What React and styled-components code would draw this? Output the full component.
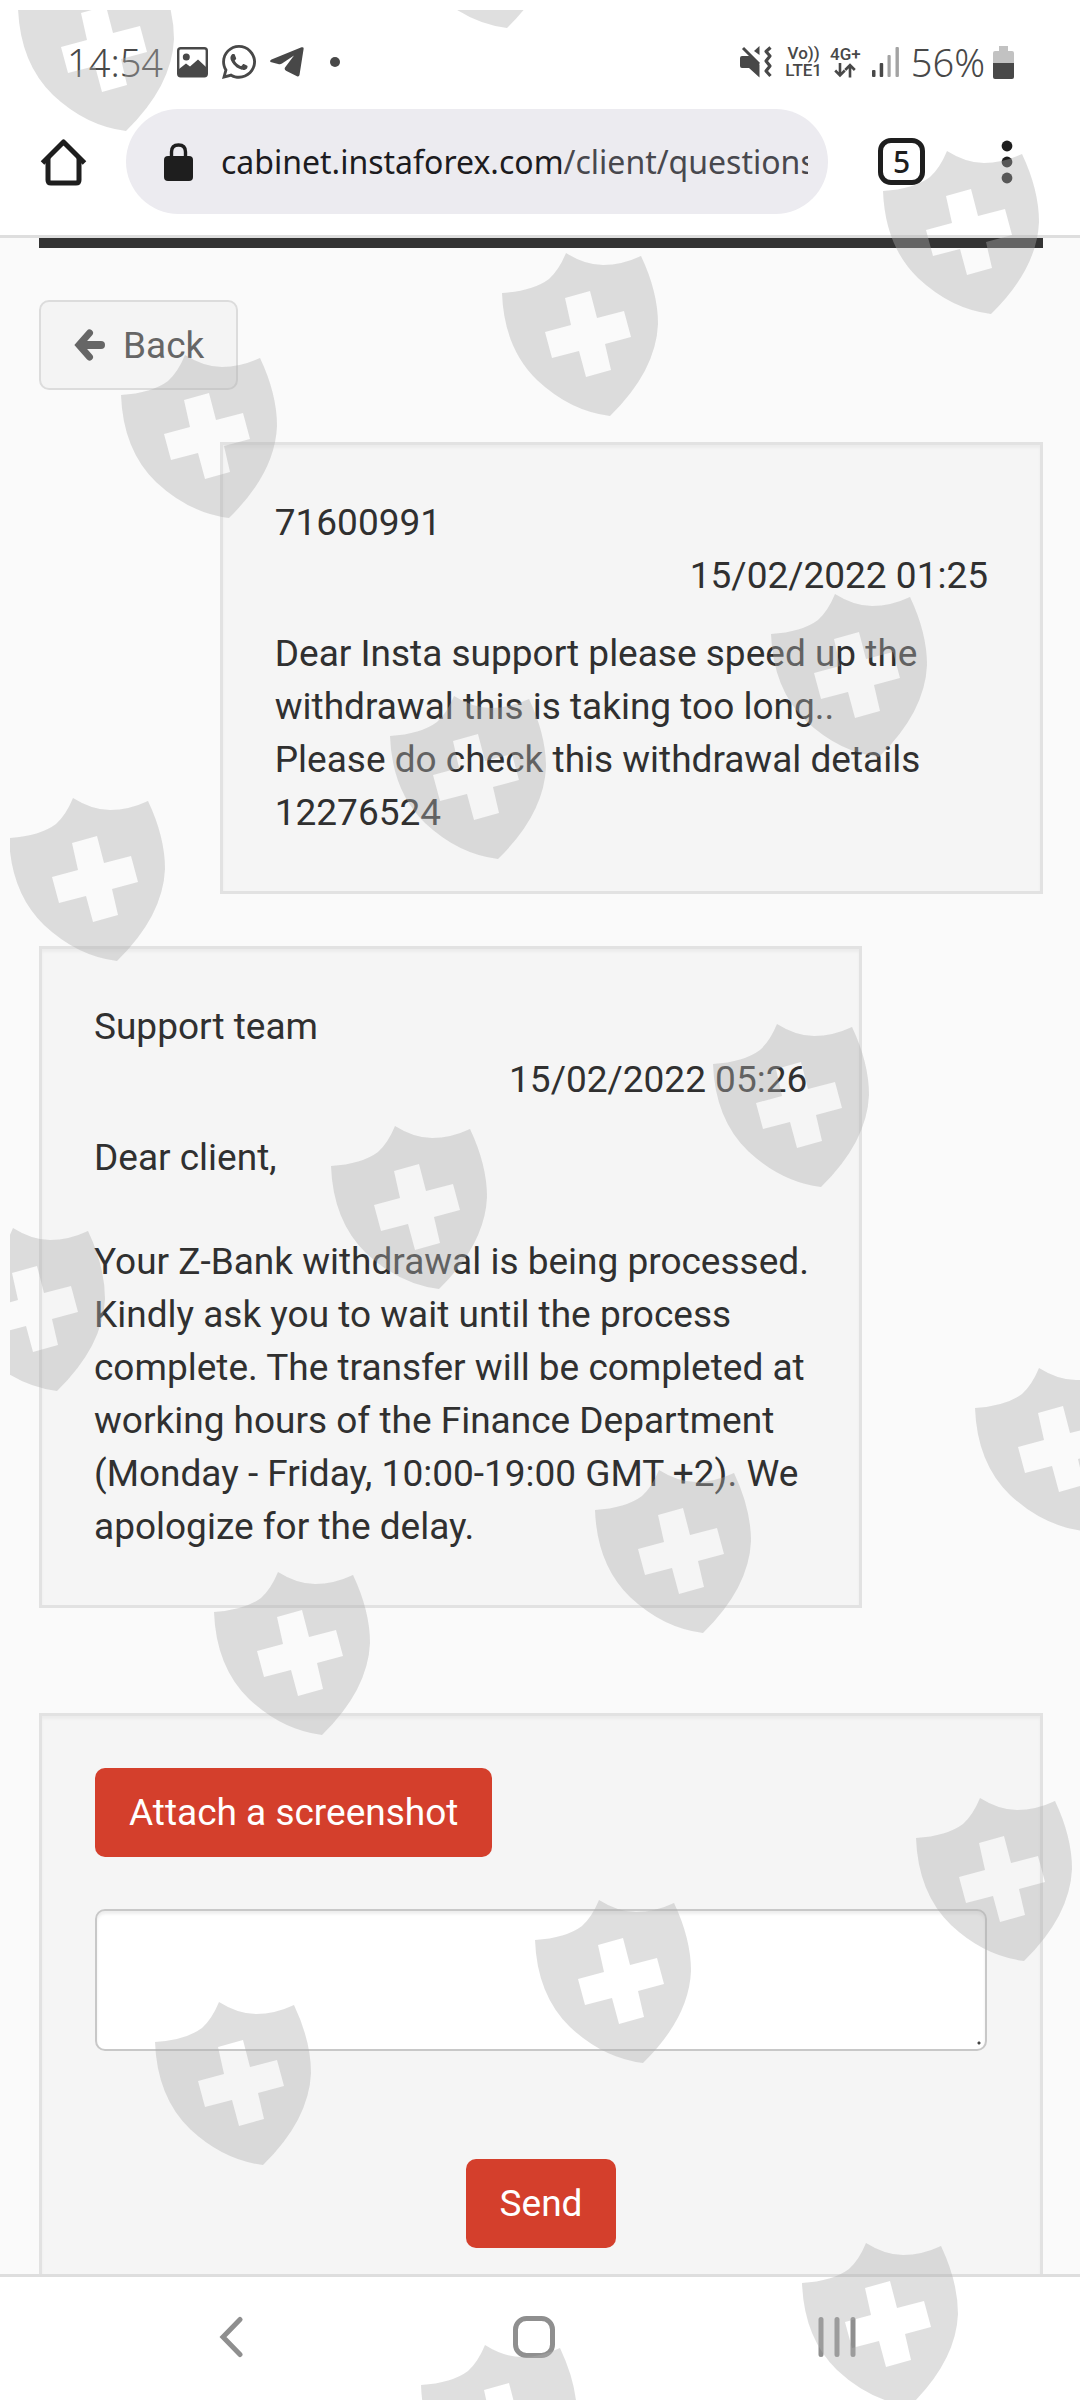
import React from "react";
import styled, { createGlobalStyle } from "styled-components";
import { FaWhatsapp } from "react-icons/fa";

const GlobalStyle = createGlobalStyle`
  *, *::before, *::after { box-sizing: border-box; }
  body {
    margin: 0;
    background: #fafafa;
    color: #303030;
    font-family: Roboto, "Liberation Sans", sans-serif;
    font-size: 37px;
    line-height: 53px;
  }
  p { margin: 0; }
  button, textarea { font: inherit; color: inherit; }
`;

const Screen = styled.div`
  position: relative;
  display: flex;
  flex-direction: column;
  height: 100vh;
  overflow: hidden;
`;

/* ---------- status bar ---------- */

const StatusBar = styled.div`
  display: flex;
  justify-content: space-between;
  align-items: center;
  height: 109px;
  padding: 15px 66px 0 67px;
  background: #fff;
  color: #484848;
`;

const StatusGroup = styled.div`
  display: flex;
  align-items: center;
  gap: ${(p) => p.$gap}px;

  svg {
    display: block;
    flex: none;
  }
`;

const StatusText = styled.span`
  font-family: "Noto Sans", sans-serif;
  font-size: 38px;
  line-height: 44px;
  font-weight: 300;
`;

const Network = styled.span`
  display: flex;
  flex-direction: column;
  align-items: center;
  font-size: 17px;
  line-height: 17px;
  font-weight: 500;
`;

/* ---------- browser bar ---------- */

const BrowserBar = styled.header`
  display: flex;
  align-items: center;
  padding: 0 67px 21px 40px;
  background: #fff;
  border-bottom: 3px solid #dedede;
  color: #1e1e1e;
`;

const IconButton = styled.button`
  display: flex;
  align-items: center;
  justify-content: center;
  flex: none;
  padding: 0;
  border: 0;
  background: none;

  svg { display: block; }
`;

const AddressPill = styled.button`
  display: flex;
  align-items: center;
  gap: 28px;
  flex: 1;
  min-width: 0;
  height: 105px;
  margin: 0 50px 0 39px;
  padding: 0 20px 0 38px;
  border: 0;
  border-radius: 53px;
  background: #ecebf0;
  text-align: left;

  svg { display: block; flex: none; }
`;

const Address = styled.span`
  flex: 1;
  min-width: 0;
  overflow: hidden;
  white-space: nowrap;
  color: #48484e;
  font-family: "Noto Sans", sans-serif;
  font-size: 32px;
  line-height: 44px;
`;

const Domain = styled.span`
  color: #1c1b20;
`;

const TabCount = styled.button`
  flex: none;
  width: 47px;
  height: 47px;
  margin-right: 76px;
  padding: 0;
  border: 5px solid #1e1e1e;
  border-radius: 13px;
  background: #fff;
  font-family: "Noto Sans", sans-serif;
  font-size: 30px;
  line-height: 36px;
  font-weight: 500;
  text-align: center;
`;

/* ---------- page ---------- */

const Page = styled.main`
  flex: 1;
  min-height: 0;
  overflow-y: auto;
  scrollbar-width: none;
  padding: 0 37px 0 39px;
`;

const TopRule = styled.hr`
  height: 10px;
  margin: 0 0 52px;
  border: 0;
  background: #333;
`;

const BackButton = styled.button`
  display: flex;
  align-items: center;
  gap: 18px;
  height: 90px;
  margin-bottom: 52px;
  padding: 0 32px;
  border: 2px solid #dcdcdc;
  border-radius: 10px;
  background: #f4f4f4;
  color: #666;

  svg { display: block; }
`;

const Panel = styled.section`
  padding: 52px 53px;
  border: 3px solid #e2e2e2;
  background: #f5f5f5;
  box-shadow: inset 0 3px 3px rgba(0, 0, 0, 0.04);
`;

const Message = styled(Panel).attrs({ as: "article" })`
  width: 82%;
  margin: 0 0 52px ${(p) => (p.$own ? "auto" : "0")};
  padding: 51px 44px 52px 52px;
`;

const MessageDate = styled.time`
  display: block;
  margin: 0 8px 25px 0;
  text-align: right;
`;

const MessageText = styled.p`
  & + & { margin-top: 51px; }
`;

const ReplyForm = styled(Panel).attrs({ as: "form" })`
  display: flex;
  flex-direction: column;
  align-items: center;
  margin-top: 105px;
`;

const RedButton = styled.button`
  height: 89px;
  padding: 0 34px;
  border: 0;
  border-radius: 10px;
  background: #d43f2c;
  color: #fff;
`;

const AttachButton = styled(RedButton)`
  align-self: flex-start;
`;

const ReplyText = styled.textarea`
  display: block;
  width: 100%;
  height: 142px;
  margin: 52px 0 108px;
  padding: 14px 30px;
  border: 2px solid #c8c8c8;
  border-radius: 10px;
  background: #fff;
  box-shadow: inset 0 3px 3px rgba(0, 0, 0, 0.07);
  resize: vertical;

  &::-webkit-resizer {
    background: radial-gradient(circle at 9px 9px, #444 1px, transparent 2px);
  }
`;

/* ---------- system navigation ---------- */

const SystemNav = styled.nav`
  display: grid;
  grid-template-columns: repeat(3, 1fr);
  justify-items: center;
  align-items: center;
  height: 126px;
  padding: 0 92px 4px 79px;
  border-top: 3px solid #dedede;
  background: #fff;
`;

/* ---------- watermark ---------- */

const Watermark = styled.svg`
  position: absolute;
  top: 10px;
  left: 10px;
  width: calc(100% - 10px);
  height: calc(100% - 10px);
  overflow: hidden;
  pointer-events: none;
`;

const SHIELDS = [
  [18, -32], [399, -135],
  [121, 355], [502, 253], [883, 151],
  [9, 798], [390, 696], [771, 594],
  [-51, 1228], [331, 1126], [713, 1024],
  [214, 1572], [595, 1470], [975, 1368],
  [155, 2002], [535, 1900], [916, 1798],
  [421, 2345], [802, 2243],
];

const SHIELD_PATH =
  "M0 40 Q31 38 47 26 Q57 17 64 0 Q83 12 101 12 Q120 12 139 3 " +
  "Q156 39 156 71 Q154 118 108 163 Q68 158 35 127 Q2 95 0 40 Z " +
  "M63 45 L88 38 L95 65 L122 58 L129 84 L103 91 L109 117 L84 124 L77 98 L50 105 L43 79 L69 72 Z";

const Shields = () => (
  <Watermark aria-hidden="true">
    {SHIELDS.map(([x, y]) => (
      <path
        key={`${x},${y}`}
        d={SHIELD_PATH}
        fillRule="evenodd"
        fill="#afafaf"
        fillOpacity="0.4"
        transform={`translate(${x - 10} ${y - 10})`}
      />
    ))}
  </Watermark>
);

/* ---------- icons ---------- */

const PictureIcon = () => (
  <svg width="31" height="31" viewBox="0 0 31 31" fill="currentColor">
    <rect x="1.2" y="1.2" width="28.6" height="28" rx="2.5" fill="none" stroke="currentColor" strokeWidth="2.4" />
    <circle cx="9.3" cy="10" r="3.5" />
    <path d="M2 22 L9 16.5 L13 19.5 L21 12.5 L29 20 V29 H2 Z" />
  </svg>
);

const TelegramIcon = () => (
  <svg width="34" height="30" viewBox="0 0 34 30" fill="currentColor">
    <path d="M.5 15 Q-.5 13.500 1.500 12.500 L31.500 .3 Q34 -.3 33.600 2 L29.500 28 Q29 30 27 29.200 L16 23.800 Q14 22.500 15 20.500 L24 8.500 L12 16.500 Q10.500 17.600 9 17.200 Z" />
  </svg>
);

const DotIcon = () => (
  <svg width="22" height="10" viewBox="-12 0 22 10" fill="currentColor">
    <circle cx="5" cy="5" r="5" />
  </svg>
);

const MutedIcon = () => (
  <svg width="37" height="32" viewBox="0 0 37 32" fill="currentColor">
    <path d="M0 12 Q0 10 2 10 H9.500 L19.500 18.500 V31.500 L9 22 H2 Q0 22 0 20 Z" />
    <path d="M19.500 0 V9 L14 5 Z" />
    <path d="M3 2 L19 18" stroke="currentColor" strokeWidth="3" />
    <path d="M30.500 1.500 L26 5.500 L30 10 L26 15 L30 20 L26 25 L30.500 30" fill="none" stroke="currentColor" strokeWidth="3.2" strokeLinejoin="round" />
  </svg>
);

const DataArrowsIcon = () => (
  <svg width="22" height="15" viewBox="0 0 22 15" fill="none" stroke="currentColor" strokeWidth="2.6">
    <path d="M6 0 V12 M1.200 7.500 L6 12.300 L10.800 7.500" />
    <path d="M16 14.500 V2.500 M11.200 7 L16 2.200 L20.800 7" />
  </svg>
);

const SignalIcon = () => (
  <svg width="34" height="30" viewBox="-3 0 34 30" fill="currentColor">
    <rect x="0" y="23" width="3.500" height="7" rx="1" />
    <rect x="7.700" y="16" width="3.500" height="14" rx="1" />
    <rect x="15.500" y="8" width="3.200" height="22" rx="1" opacity="0.5" />
    <rect x="23.500" y="0" width="3.400" height="30" rx="1" opacity="0.5" />
  </svg>
);

const BatteryIcon = () => (
  <svg width="21" height="33" viewBox="0 0 21 33">
    <path d="M6 0 H15 V5 H19 Q21 5 21 7 V17 H0 V7 Q0 5 2 5 H6 Z" fill="#c2c2c2" />
    <path d="M0 17 H21 V31 Q21 33 19 33 H2 Q0 33 0 31 Z" fill="#484848" />
  </svg>
);

const HomeIcon = () => (
  <svg width="47" height="48" viewBox="0 0 47 48" fill="none" stroke="currentColor" strokeWidth="5">
    <path d="M2.500 25 L23.500 4 L44.500 25" strokeLinejoin="round" />
    <path d="M8 20 V42 Q8 45 11 45 H36 Q39 45 39 42 V20" />
  </svg>
);

const LockIcon = () => (
  <svg width="29" height="38" viewBox="0 0 29 38" fill="#1e1e1e">
    <rect x="0" y="13" width="29" height="25" rx="4" />
    <path d="M7.500 15 V9 Q7.500 2 14.500 2 Q21.500 2 21.500 9 V15" fill="none" stroke="#1e1e1e" strokeWidth="3.400" />
  </svg>
);

const MenuIcon = () => (
  <svg width="12" height="44" viewBox="0 0 12 44" fill="currentColor">
    <circle cx="6" cy="6" r="5.400" />
    <circle cx="6" cy="22" r="5.400" />
    <circle cx="6" cy="38" r="5.400" />
  </svg>
);

const ArrowLeftIcon = () => (
  <svg width="32" height="34" viewBox="0 0 32 34" fill="none" stroke="currentColor" strokeWidth="7" strokeLinecap="round">
    <path d="M16.500 5 L6 17 L16.500 29" />
    <path d="M8 17 H28" strokeWidth="8" />
  </svg>
);

const ChevronIcon = () => (
  <svg width="24" height="42" viewBox="0 0 24 42" fill="none" stroke="#8f8f8f" strokeWidth="5" strokeLinecap="round">
    <path d="M21 3.500 L4 21 L21 38.500" />
  </svg>
);

const SquareIcon = () => (
  <svg width="42" height="42" viewBox="0 0 42 42" fill="none" stroke="#8f8f8f" strokeWidth="5">
    <rect x="2.500" y="2.500" width="37" height="37" rx="11" />
  </svg>
);

const RecentsIcon = () => (
  <svg width="38" height="42" viewBox="0 0 38 42" stroke="#8f8f8f" strokeWidth="5" strokeLinecap="round">
    <path d="M3 3.500 V38.500 M19 3.500 V38.500 M35 3.500 V38.500" />
  </svg>
);

export default function App() {
  return (
    <>
      <GlobalStyle />
      <Screen>
        <StatusBar>
          <StatusGroup $gap={14}>
            <StatusText>14:54</StatusText>
            <PictureIcon />
            <FaWhatsapp size={34} viewBox="0 32 448 448" />
            <TelegramIcon />
            <DotIcon />
          </StatusGroup>
          <StatusGroup $gap={8}>
            <MutedIcon />
            <Network>
              <span>Vo))</span>
              <span>LTE1</span>
            </Network>
            <Network>
              <span>4G+</span>
              <DataArrowsIcon />
            </Network>
            <SignalIcon />
            <StatusText>56%</StatusText>
            <BatteryIcon />
          </StatusGroup>
        </StatusBar>

        <BrowserBar>
          <IconButton type="button" aria-label="Home">
            <HomeIcon />
          </IconButton>
          <AddressPill type="button">
            <LockIcon />
            <Address>
              <Domain>cabinet.instaforex.com</Domain>/client/questions
            </Address>
          </AddressPill>
          <TabCount type="button">5</TabCount>
          <IconButton type="button" aria-label="Menu">
            <MenuIcon />
          </IconButton>
        </BrowserBar>

        <Page>
          <TopRule />
          <BackButton type="button">
            <ArrowLeftIcon />
            Back
          </BackButton>

          <Message $own>
            <p>71600991</p>
            <MessageDate>15/02/2022 01:25</MessageDate>
            <MessageText>
              Dear Insta support please speed up the withdrawal this is taking too long..
              <br />
              Please do check this withdrawal details 12276524
            </MessageText>
          </Message>

          <Message>
            <p>Support team</p>
            <MessageDate>15/02/2022 05:26</MessageDate>
            <MessageText>Dear client,</MessageText>
            <MessageText>
              Your Z-Bank withdrawal is being processed. Kindly ask you to wait until the process
              complete. The transfer will be completed at working hours of the Finance Department
              (Monday - Friday, 10:00-19:00 GMT +2). We apologize for the delay.
            </MessageText>
          </Message>

          <ReplyForm>
            <AttachButton type="button">Attach a screenshot</AttachButton>
            <ReplyText aria-label="Message" />
            <RedButton type="button">Send</RedButton>
          </ReplyForm>
        </Page>

        <SystemNav>
          <IconButton type="button" aria-label="Back">
            <ChevronIcon />
          </IconButton>
          <IconButton type="button" aria-label="Home screen">
            <SquareIcon />
          </IconButton>
          <IconButton type="button" aria-label="Recent apps">
            <RecentsIcon />
          </IconButton>
        </SystemNav>

        <Shields />
      </Screen>
    </>
  );
}
